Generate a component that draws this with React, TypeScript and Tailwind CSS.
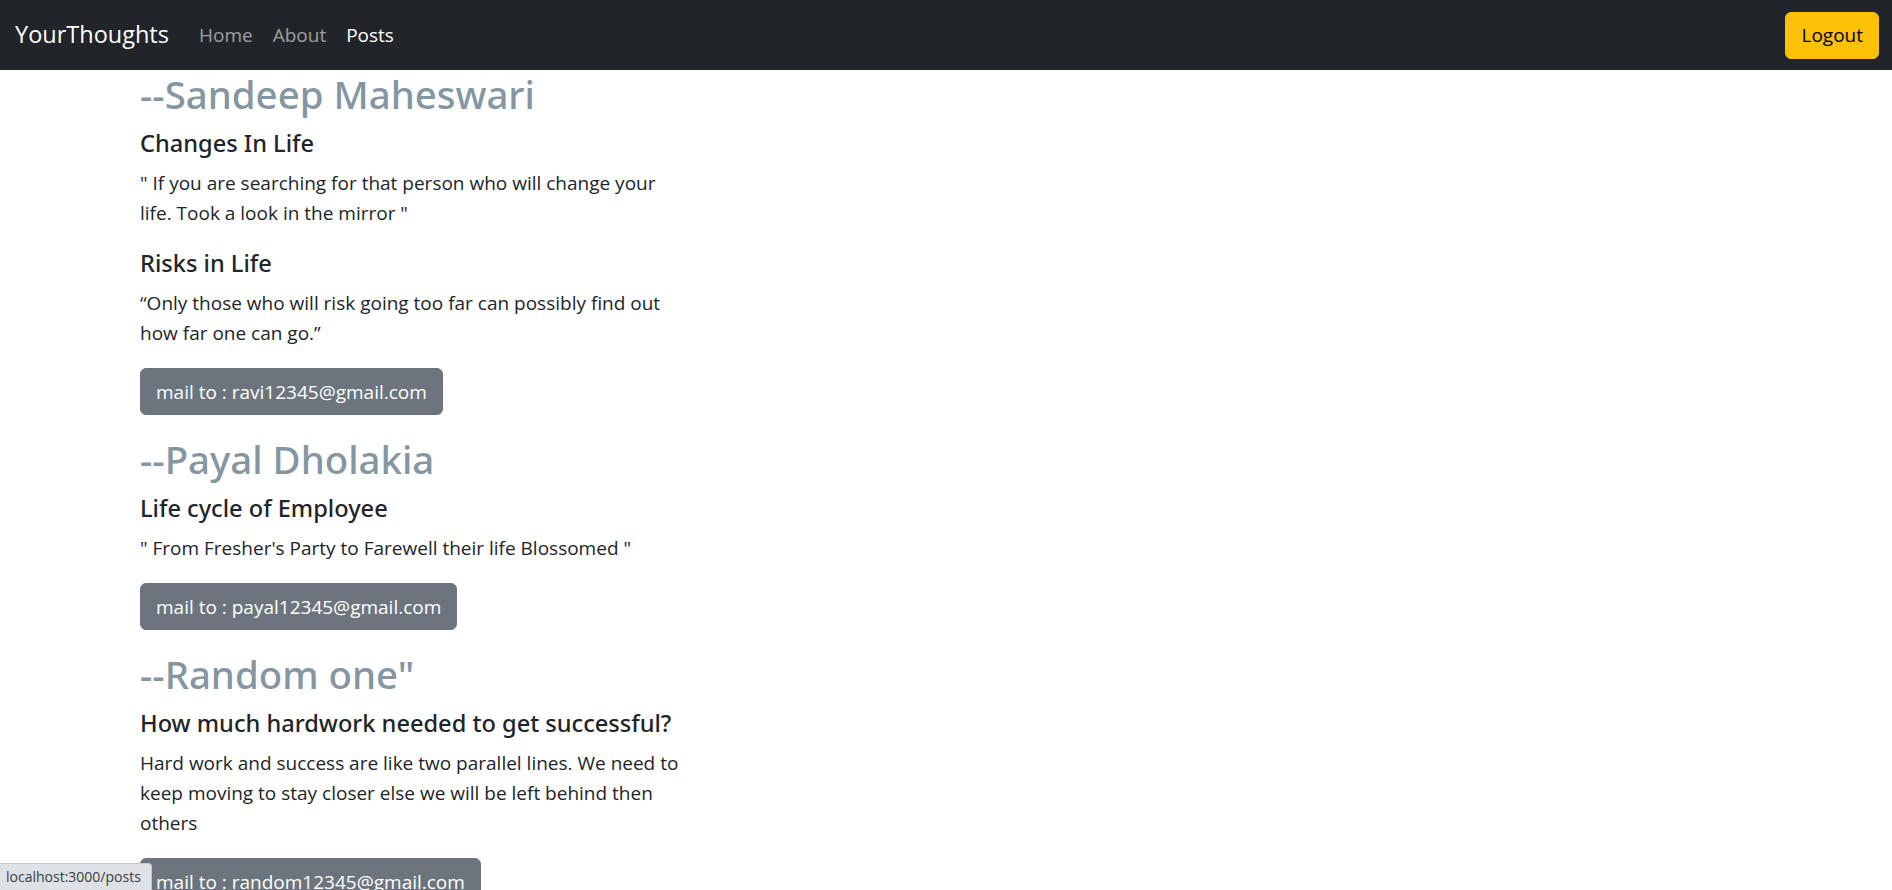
import React from "react";

interface Thought {
  title: string;
  body: string;
}

interface Post {
  author: string;
  email: string;
  thoughts: Thought[];
}

const POSTS: Post[] = [
  {
    author: "--Sandeep Maheswari",
    email: "ravi12345@gmail.com",
    thoughts: [
      {
        title: "Changes In Life",
        body: '" If you are searching for that person who will change your life. Took a look in the mirror "',
      },
      {
        title: "Risks in Life",
        body: "\u201cOnly those who will risk going too far can possibly find out how far one can go.\u201d",
      },
    ],
  },
  {
    author: "--Payal Dholakia",
    email: "payal12345@gmail.com",
    thoughts: [
      {
        title: "Life cycle of Employee",
        body: "\" From Fresher's Party to Farewell their life Blossomed \"",
      },
    ],
  },
  {
    author: '--Random one"',
    email: "random12345@gmail.com",
    thoughts: [
      {
        title: "How much hardwork needed to get successful?",
        body: "Hard work and success are like two parallel lines. We need to keep moving to stay closer else we will be left behind then others",
      },
    ],
  },
];

const FONT = "font-['Segoe_UI','Open_Sans','Noto_Sans',sans-serif]";
const HEAD_FONT = "font-['Segoe_UI','Noto_Sans','Open_Sans',sans-serif]";

function Navbar() {
  return (
    <nav className="flex h-[70px] items-center justify-between bg-[#212529] pl-[15px] pr-[13px]">
      <div className="flex items-center">
        <a href="#" className="mr-[20px] text-[23.5px] leading-[37.5px] text-white">
          YourThoughts
        </a>
        <ul className="flex items-center text-[19px] leading-[30px]">
          <li>
            <a href="#" className="px-[10px] text-white/55">
              Home
            </a>
          </li>
          <li>
            <a href="#" className="px-[10px] text-white/55">
              About
            </a>
          </li>
          <li>
            <a href="#" className="px-[10px] text-white">
              Posts
            </a>
          </li>
        </ul>
      </div>
      <button className="rounded-[6px] border border-[#ffc107] bg-[#ffc107] px-[15px] py-[7.5px] text-[19px] leading-[30px] text-black">
        Logout
      </button>
    </nav>
  );
}

function PostBlock({ post }: { post: Post }) {
  return (
    <div className="mb-[20px]">
      <h2
        className={`${HEAD_FONT} mb-[10px] text-[38.4px] font-medium leading-[48px] text-[#8596a3]`}
      >
        {post.author}
      </h2>
      {post.thoughts.map((t) => (
        <div key={t.title}>
          <h5
            className={`${HEAD_FONT} mb-[10px] text-[23.6px] font-medium leading-[30px] text-[#212529]`}
          >
            {t.title}
          </h5>
          <p className="mb-[20px] w-[552px] text-[19px] leading-[30px] text-[#212529]">
            {t.body}
          </p>
        </div>
      ))}
      <button className="rounded-[6px] border border-[#6c757d] bg-[#6c757d] px-[15px] py-[7.5px] text-[19px] leading-[30px] text-white">
        mail to : {post.email}
      </button>
    </div>
  );
}

export default function App() {
  return (
    <div className={`${FONT} min-h-screen bg-white`}>
      <Navbar />
      <main className="pl-[140px]">
        {POSTS.map((p) => (
          <PostBlock key={p.author} post={p} />
        ))}
      </main>
      {/* browser status bubble */}
      <div className="fixed bottom-0 left-0 rounded-tr-[4px] border-t border-r border-[#c4c7cc] bg-[#dee1e6] pl-[6px] pr-[10px] text-[14px] leading-[26px] text-[#3c4043]">
        localhost:3000/posts
      </div>
    </div>
  );
}
